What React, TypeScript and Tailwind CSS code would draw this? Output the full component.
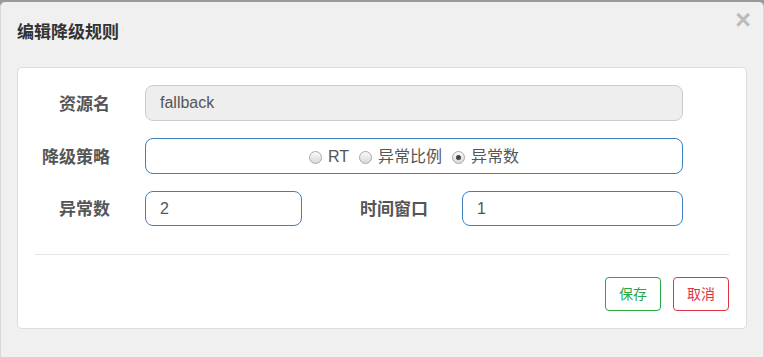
import React from "react";

const font = { fontFamily: '"Liberation Sans", "Noto Sans CJK SC", sans-serif' };

function Radio({ checked, label }: { checked?: boolean; label: string }) {
    return (
        <span className="inline-flex items-center gap-[6px]">
            <span className="w-[13px] h-[13px] rounded-full border border-[#a9a9a9] bg-gradient-to-b from-[#fafafa] to-[#d9d9d9] flex items-center justify-center">
                {checked && <span className="w-[5px] h-[5px] rounded-full bg-[#444]" />}
            </span>
            <span>{label}</span>
        </span>
    );
}

export default function App() {
    return (
        <div className="w-[764px] h-[357px] bg-[#9a9a9a] pt-[2px] overflow-hidden" style={font}>
            <div className="h-[360px] bg-[#f0f0f0] rounded-t-[5px] border-x border-[#d8d8d8] relative">
                {/* header */}
                <div className="h-[65px] pl-[16px] pt-[19px]">
                    <h4 className="text-[17px] font-bold text-[#333] leading-[24px]">编辑降级规则</h4>
                </div>
                <span className="absolute right-[12px] top-[5px] text-[27px] font-bold text-[#bcbcbc] leading-none">×</span>

                {/* body card */}
                <div className="mx-[16px] bg-white border border-[#dcdcdc] rounded-[5px] pt-[17px] pb-[17px]">
                    <div className="flex flex-col gap-[17px] pr-[63px]">
                        <div className="flex items-center">
                            <label className="w-[92px] pt-[3px] text-right text-[17px] font-bold text-[#555]">资源名</label>
                            <div className="ml-[35px] flex-1 h-[36px] rounded-[8px] border border-[#cccccc] bg-[#eeeeee] flex items-center px-[14px] text-[16px] text-[#555]">
                                fallback
                            </div>
                        </div>
                        <div className="flex items-center">
                            <label className="w-[92px] pt-[3px] text-right text-[17px] font-bold text-[#555]">降级策略</label>
                            <div className="ml-[35px] flex-1 h-[36px] rounded-[8px] border border-[#3f7fbf] flex items-center justify-center gap-[10px] pt-[2px] text-[16px] text-[#555]">
                                <Radio label="RT" />
                                <Radio label="异常比例" />
                                <Radio checked label="异常数" />
                            </div>
                        </div>
                        <div className="flex items-center">
                            <label className="w-[92px] pt-[3px] text-right text-[17px] font-bold text-[#555]">异常数</label>
                            <div className="ml-[35px] w-[157px] h-[35px] rounded-[8px] border border-[#3f7fbf] flex items-center px-[14px] text-[16px] text-[#555]">
                                2
                            </div>
                            <label className="w-[126px] pt-[3px] text-right text-[17px] font-bold text-[#555]">时间窗口</label>
                            <div className="ml-[34px] flex-1 h-[35px] rounded-[8px] border border-[#3f7fbf] flex items-center px-[14px] text-[16px] text-[#555]">
                                1
                            </div>
                        </div>
                    </div>

                    <div className="mx-[17px] mt-[28px] border-t border-[#e5e5e5]" />

                    <div className="flex justify-end gap-[12px] pr-[17px] mt-[22px]">
                        <button className="w-[56px] h-[34px] rounded-[4px] border border-[#28a745] text-[#28a745] text-[14px] bg-white">保存</button>
                        <button className="w-[56px] h-[34px] rounded-[4px] border border-[#dc3545] text-[#dc3545] text-[14px] bg-white">取消</button>
                    </div>
                </div>
            </div>
        </div>
    );
}
